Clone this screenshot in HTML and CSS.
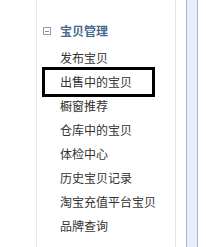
FILE: index.html
```html
<!DOCTYPE html>
<html>
<head>
<meta charset="utf-8">
<link rel="stylesheet" href="styles.css">
</head>
<body>
<div class="page">
  <div class="gutter"></div>
  <div class="panel">
    <div class="prev">交易评价管理</div>
    <div class="heading">
      <span class="toggle"><span class="bar"></span></span>
      <span class="title">宝贝管理</span>
    </div>
    <ul class="menu">
      <li class="item">发布宝贝</li>
      <li class="item selected">出售中的宝贝</li>
      <li class="item">橱窗推荐</li>
      <li class="item">仓库中的宝贝</li>
      <li class="item">体检中心</li>
      <li class="item">历史宝贝记录</li>
      <li class="item">淘宝充值平台宝贝</li>
      <li class="item">品牌查询</li>
    </ul>
  </div>
  <div class="spacer"></div>
  <div class="scroll"></div>
</div>
</body>
</html>
```
FILE: styles.css
```css
html, body {
  margin: 0;
  padding: 0;
  background: #ffffff;
  overflow: hidden;
}
.page {
  display: flex;
  height: 247px;
  width: 206px;
  font-family: "Noto Sans CJK SC", "Noto Sans", sans-serif;
  font-size: 12px;
  color: #333333;
}
.gutter {
  width: 36px;
  flex: none;
}
.panel {
  width: 138px;
  flex: none;
  border-left: 1px solid #e2e8f0;
  border-right: 1px solid #dce5f0;
  overflow: hidden;
}
.prev {
  height: 24px;
  line-height: 24px;
  margin-top: -19px;
  padding-left: 27px;
  color: #333333;
}
.heading {
  display: flex;
  align-items: center;
  height: 24px;
  margin-top: 14px;
}
.toggle {
  width: 6px;
  height: 6px;
  border: 1px solid #8d9db2;
  margin-left: 6px;
  margin-right: 9px;
  display: flex;
  align-items: center;
  justify-content: center;
}
.bar {
  width: 4px;
  height: 1px;
  background: #7b8ea8;
}
.title {
  font-weight: bold;
  color: #46698f;
  line-height: 24px;
}
.menu {
  list-style: none;
  margin: 3px 0 0 0;
  padding: 0;
}
.item {
  height: 24px;
  line-height: 24px;
  margin-left: 8px;
  width: 92px;
  padding-left: 15px;
  white-space: nowrap;
}
.selected {
  outline: 3px solid #000000;
}
.spacer {
  width: 10px;
  flex: none;
}
.scroll {
  width: 10px;
  flex: none;
  background: #e7eef8;
  border-left: 1px solid #a3bbd8;
  border-right: 1px solid #a3bbd8;
}
```
